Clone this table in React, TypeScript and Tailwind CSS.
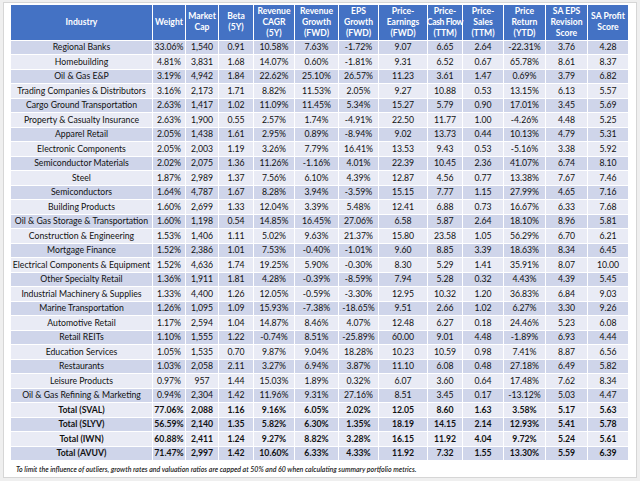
const columns = [
  { label: ["Industry"], width: 142 },
  { label: ["Weight"], width: 33 },
  { label: ["Market", "Cap"], width: 33 },
  { label: ["Beta", "(5Y)"], width: 35 },
  { label: ["Revenue", "CAGR", "(5Y)"], width: 41 },
  { label: ["Revenue", "Growth", "(FWD)"], width: 44 },
  { label: ["EPS", "Growth", "(FWD)"], width: 40 },
  { label: ["Price-", "Earnings", "(FWD)"], width: 49 },
  { label: ["Price-", "Cash Flow", "(TTM)"], width: 35 },
  { label: ["Price-", "Sales", "(TTM)"], width: 41 },
  { label: ["Price", "Return", "(YTD)"], width: 42 },
  { label: ["SA EPS", "Revision", "Score"], width: 42 },
  { label: ["SA Profit", "Score"], width: 41 },
];

const rows: string[][] = [
  ["Regional Banks", "33.06%", "1,540", "0.91", "10.58%", "7.63%", "-1.72%", "9.07", "6.65", "2.64", "-22.31%", "3.76", "4.28"],
  ["Homebuilding", "4.81%", "3,831", "1.68", "14.07%", "0.60%", "-1.81%", "9.31", "6.52", "0.67", "65.78%", "8.61", "8.37"],
  ["Oil & Gas E&P", "3.19%", "4,942", "1.84", "22.62%", "25.10%", "26.57%", "11.23", "3.61", "1.47", "0.69%", "3.79", "6.82"],
  ["Trading Companies & Distributors", "3.16%", "2,173", "1.71", "8.82%", "11.53%", "2.05%", "9.27", "10.88", "0.53", "13.15%", "6.13", "5.57"],
  ["Cargo Ground Transportation", "2.63%", "1,417", "1.02", "11.09%", "11.45%", "5.34%", "15.27", "5.79", "0.90", "17.01%", "3.45", "5.69"],
  ["Property & Casualty Insurance", "2.63%", "1,900", "0.55", "2.57%", "1.74%", "-4.91%", "22.50", "11.77", "1.00", "-4.26%", "4.48", "5.25"],
  ["Apparel Retail", "2.05%", "1,438", "1.61", "2.95%", "0.89%", "-8.94%", "9.02", "13.73", "0.44", "10.13%", "4.79", "5.31"],
  ["Electronic Components", "2.05%", "2,003", "1.19", "3.26%", "7.79%", "16.41%", "13.53", "9.43", "0.53", "-5.16%", "3.38", "5.92"],
  ["Semiconductor Materials", "2.02%", "2,075", "1.36", "11.26%", "-1.16%", "4.01%", "22.39", "10.45", "2.36", "41.07%", "6.74", "8.10"],
  ["Steel", "1.87%", "2,989", "1.37", "7.56%", "6.10%", "4.39%", "12.87", "4.56", "0.77", "13.38%", "7.67", "7.46"],
  ["Semiconductors", "1.64%", "4,787", "1.67", "8.28%", "3.94%", "-3.59%", "15.15", "7.77", "1.15", "27.99%", "4.65", "7.16"],
  ["Building Products", "1.60%", "2,699", "1.33", "12.04%", "3.39%", "5.48%", "12.41", "6.88", "0.73", "16.67%", "6.33", "7.68"],
  ["Oil & Gas Storage & Transportation", "1.60%", "1,198", "0.54", "14.85%", "16.45%", "27.06%", "6.58", "5.87", "2.64", "18.10%", "8.96", "5.81"],
  ["Construction & Engineering", "1.53%", "1,406", "1.11", "5.02%", "9.63%", "21.37%", "15.80", "23.58", "1.05", "56.29%", "6.70", "6.21"],
  ["Mortgage Finance", "1.52%", "2,386", "1.01", "7.53%", "-0.40%", "-1.01%", "9.60", "8.85", "3.39", "18.63%", "8.34", "6.45"],
  ["Electrical Components & Equipment", "1.52%", "4,636", "1.74", "19.25%", "5.90%", "-0.30%", "8.30", "5.29", "1.41", "35.91%", "8.07", "10.00"],
  ["Other Specialty Retail", "1.36%", "1,911", "1.81", "4.28%", "-0.39%", "-8.59%", "7.94", "5.28", "0.32", "4.43%", "4.39", "5.45"],
  ["Industrial Machinery & Supplies", "1.33%", "4,400", "1.26", "12.05%", "-0.59%", "-3.30%", "12.95", "10.32", "1.20", "36.83%", "6.84", "9.03"],
  ["Marine Transportation", "1.26%", "1,095", "1.09", "15.93%", "-7.38%", "-18.65%", "9.51", "2.66", "1.02", "6.27%", "3.30", "9.26"],
  ["Automotive Retail", "1.17%", "2,594", "1.04", "14.87%", "8.46%", "4.07%", "12.48", "6.27", "0.18", "24.46%", "5.23", "6.08"],
  ["Retail REITs", "1.10%", "1,555", "1.22", "-0.74%", "8.51%", "-25.89%", "60.00", "9.01", "4.48", "-1.89%", "6.93", "4.44"],
  ["Education Services", "1.05%", "1,535", "0.70", "9.87%", "9.04%", "18.28%", "10.23", "10.59", "0.98", "7.41%", "8.87", "6.56"],
  ["Restaurants", "1.03%", "2,058", "2.11", "3.27%", "6.94%", "3.87%", "11.10", "6.08", "0.48", "27.18%", "6.49", "5.82"],
  ["Leisure Products", "0.97%", "957", "1.44", "15.03%", "1.89%", "0.32%", "6.07", "3.60", "0.64", "17.48%", "7.62", "8.34"],
  ["Oil & Gas Refining & Marketing", "0.94%", "2,304", "1.42", "11.96%", "9.31%", "27.16%", "8.51", "3.45", "0.17", "-13.12%", "5.03", "4.47"],
];

const totals: string[][] = [
  ["Total (SVAL)", "77.06%", "2,088", "1.16", "9.16%", "6.05%", "2.02%", "12.05", "8.60", "1.63", "3.58%", "5.17", "5.63"],
  ["Total (SLYV)", "56.59%", "2,140", "1.35", "5.82%", "6.30%", "1.35%", "18.19", "14.15", "2.14", "12.93%", "5.41", "5.78"],
  ["Total (IWN)", "60.88%", "2,411", "1.24", "9.27%", "8.82%", "3.28%", "16.15", "11.92", "4.04", "9.72%", "5.24", "5.61"],
  ["Total (AVUV)", "71.47%", "2,997", "1.42", "10.60%", "6.33%", "4.33%", "11.92", "7.32", "1.55", "13.30%", "5.59", "6.39"],
];

export default function App() {
  const all = [...rows.map((r) => ({ r, bold: false })), ...totals.map((r) => ({ r, bold: true }))];
  return (
    <div className="w-[640px] h-[481px] bg-[#efefef] pt-[2px] pl-[3px] font-['Lato',sans-serif] text-black">
      <div className="w-[634px] h-[476px] bg-white border border-[#d6d6d6] pl-[6px] pt-[2px]">
        <table className="table-fixed border-collapse w-[618px]">
          <colgroup>
            {columns.map((c, i) => (
              <col key={i} style={{ width: c.width }} />
            ))}
          </colgroup>
          <thead>
            <tr className="h-[35px] bg-[#4472c4]">
              {columns.map((c, i) => (
                <th
                  key={i}
                  className="border border-white border-t-0 p-0 text-center text-[8.6px] leading-[11px] font-bold text-white whitespace-nowrap"
                >
                  {c.label.map((l, j) => (
                    <div key={j} className={l === "Cash Flow" ? "tracking-[-0.35px] -mx-[2px]" : ""}>
                      {l}
                    </div>
                  ))}
                </th>
              ))}
            </tr>
          </thead>
          <tbody>
            {all.map(({ r, bold }, i) => (
              <tr key={i} className={`h-[14.5px] ${i % 2 === 0 ? "bg-[#cfd5ea]" : "bg-[#e9ebf5]"}`}>
                {r.map((v, j) => (
                  <td
                    key={j}
                    className={`border border-white p-0 text-center text-[8.7px] leading-[12px] whitespace-nowrap text-[#111] ${bold ? "font-bold" : ""}`}
                  >
                    {v}
                  </td>
                ))}
              </tr>
            ))}
          </tbody>
        </table>
        <p className="mt-[4px] pl-[6px] text-[7px] leading-[9px] italic font-semibold text-[#222]">
          To limit the influence of outliers, growth rates and valuation ratios are capped at 50% and 60 when calculating summary portfolio metrics.
        </p>
      </div>
    </div>
  );
}
